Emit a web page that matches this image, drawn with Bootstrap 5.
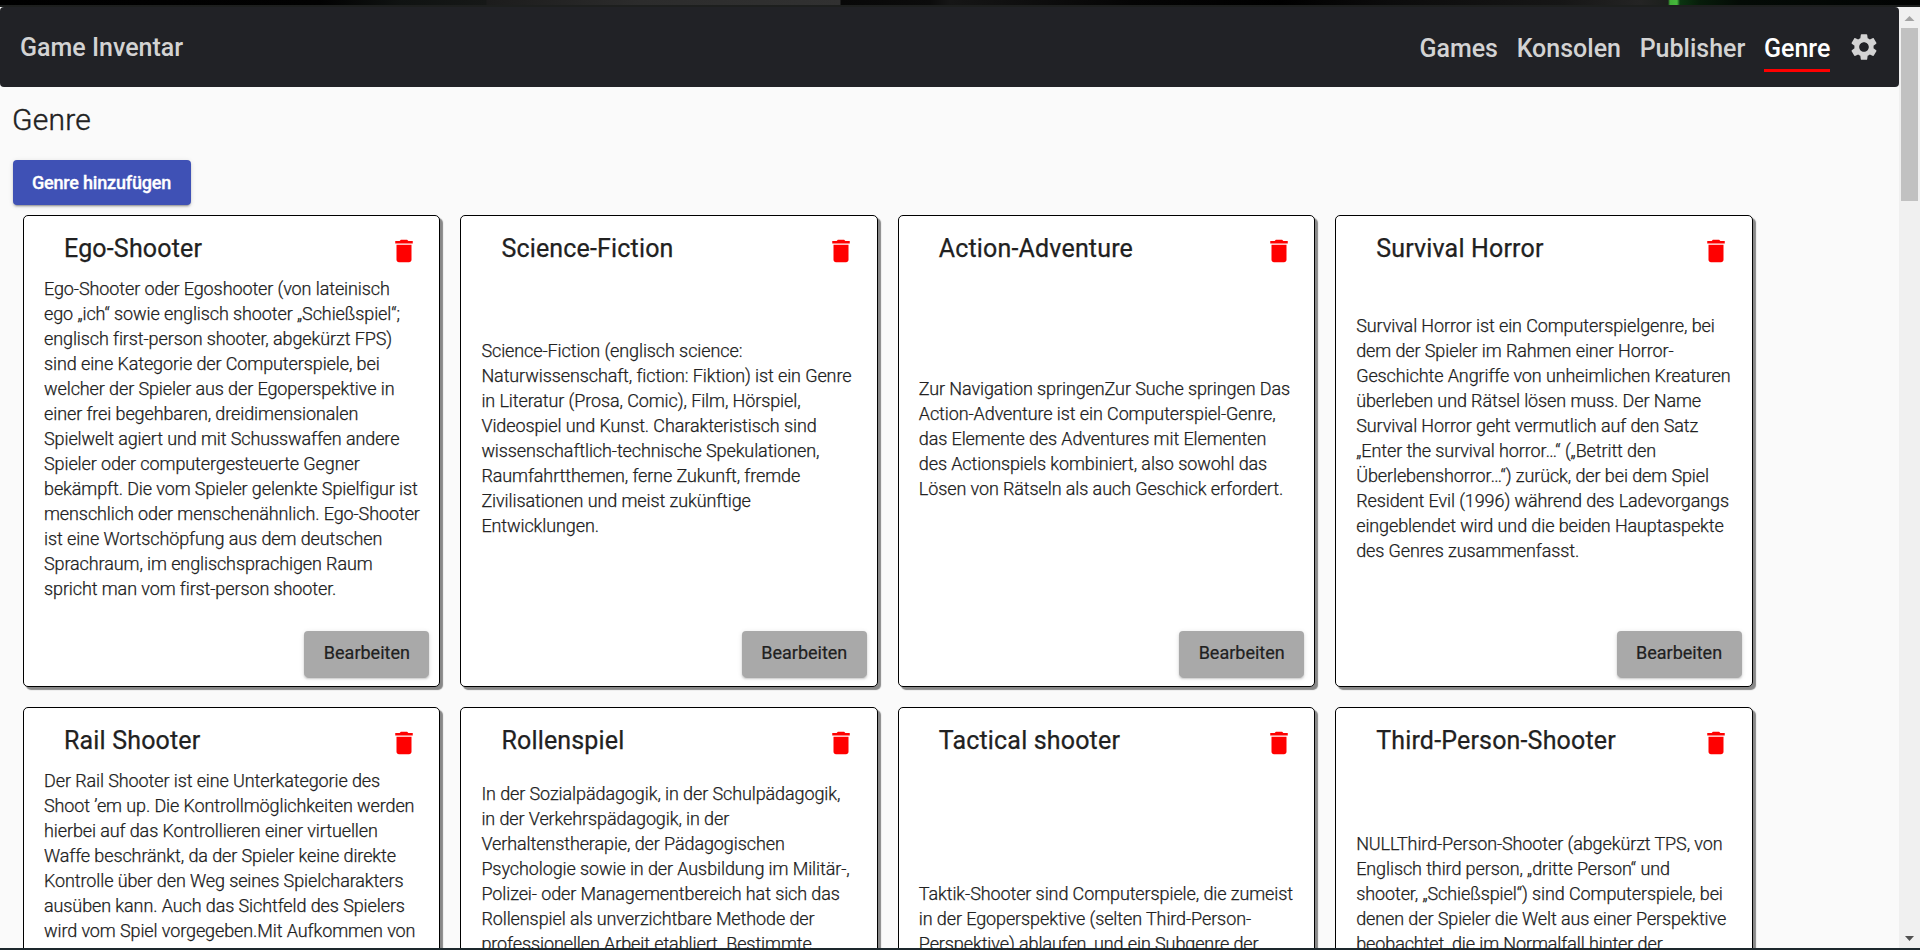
<!DOCTYPE html>
<html lang="de">
<head>
<meta charset="utf-8">
<title>Game Inventar</title>
<link rel="stylesheet" href="https://cdn.jsdelivr.net/npm/bootstrap@5.3.0/dist/css/bootstrap.min.css">
<style>
body { background: #fafafa; color: #212121; font-family: Roboto, "Liberation Sans", sans-serif; height: 950px; overflow: hidden; }
.top-strip { height: 7px; border-bottom: 2px solid #1d1f1e; background: linear-gradient(90deg, #000 0, #020202 320px, #101312 400px, #161817 486px, #1c1c1c 487px, #2c2c2c 640px, #313131 840px, #080808 841px, #0c0c0c 930px, #161616 950px, #050505 1130px, #000 1280px, #0c0c0c 1390px, #161616 1560px, #242424 1640px, #1c1f1c 1668px, #3fae36 1670px, #46b83c 1677px, #0a3510 1680px, #071c0a 1700px, #040b06 1740px, #020303 1920px); }
.viewport-area { height: 941px; }
.page-area { width: 1899px; overflow: hidden; }
.topbar { height: 80px; background: #212226; border-radius: 4px; padding: 0 19px 0 20px; font-weight: 500; }
.topbar .navbar-brand, .topbar .nav-link { color: #d3d3d3; font-size: 25px; line-height: 32px; padding: 0; margin: 0; }
.topbar .navbar-brand { padding-top: 2px; }
.topbar .nav-link { border-bottom: 3px solid transparent; padding: 10px 0 4px; margin-top: 1px; }
.topbar .nav-link.active { color: #fff; border-color: #f00; }
.nav-items { gap: 18.7px; }
.topbar svg { margin-left: -1px; }
.page-title { font-size: 30px; font-weight: 300; line-height: 36px; margin: 15px 0 22px 12px; letter-spacing: .2px; -webkit-text-stroke: .4px #212121; }
.mat-btn { border: 0; border-radius: 4px; font-size: 18px; font-weight: 500; line-height: 45px; padding: 0; box-shadow: 0 3px 1px -2px rgba(0,0,0,.2), 0 2px 2px 0 rgba(0,0,0,.14), 0 1px 5px 0 rgba(0,0,0,.12); }
.mat-add { background: #3f51b5; color: #fff; margin-left: 13px; width: 178px; height: 45px; letter-spacing: -.2px; padding-right: 1px; -webkit-text-stroke: .3px #fff; }
.mat-edit { background: #a9a9a9; color: #212121; height: 46px; width: 125px; font-weight: 400; line-height: 44px; padding-bottom: 2px; -webkit-text-stroke: .2px #212121; }
.genre-list { width: 1780px; padding-left: 13px; }
.genre-card { width: 417.4px; height: 472px; margin: 10px; border: 1px solid #000; border-radius: 5px; box-shadow: 3px 3px 1px #888; background: #fff; }
.card-head { height: 60px; padding: 16px 20.3px 0 40px; }
.card-head h2 { font-size: 25px; font-weight: 400; line-height: 34px; margin: 0; letter-spacing: .17px; -webkit-text-stroke: .25px #212121; }
.card-head svg { margin-top: 4px; }
.genre-text { height: 324.6px; padding: 0 18.5px 0 20px; font-size: 18px; font-weight: 300; line-height: 25px; letter-spacing: -.1px; -webkit-text-stroke: .25px #212121; }
.card-foot { padding: 30.4px 10px 0 0; }
.scroll-rail { width: 21px; background: #f0f0f0; }
.scroll-rail .thumb { width: 17px; height: 173px; margin-left: 2px; background: #c1c1c1; }
.bottom-strip { height: 2px; background: #1d282d; }
</style>
</head>
<body>
<svg class="d-none">
  <symbol id="trash" viewBox="0 0 24 24"><path d="M6 19c0 1.1.9 2 2 2h8c1.1 0 2-.9 2-2V7H6v12zM19 4h-3.500l-1-1h-5l-1 1H5v2h14V4z"/></symbol>
  <symbol id="gear" viewBox="0 0 24 24"><path d="M19.140 12.940c.04-.3.06-.61.06-.94 0-.32-.02-.64-.07-.94l2.030-1.580c.18-.14.23-.41.12-.61l-1.920-3.320c-.12-.22-.37-.29-.59-.22l-2.390.96c-.5-.38-1.030-.7-1.620-.94l-.36-2.540c-.04-.24-.24-.41-.48-.41h-3.840c-.24 0-.43.17-.47.41l-.36 2.540c-.59.24-1.130.57-1.620.94l-2.390-.96c-.22-.08-.47 0-.59.22L2.740 8.870c-.12.21-.08.47.12.61l2.030 1.580c-.05.3-.09.63-.09.94s.02.64.07.94l-2.030 1.580c-.18.14-.23.41-.12.61l1.920 3.320c.12.22.37.29.59.22l2.390-.96c.5.38 1.030.7 1.620.94l.36 2.540c.05.24.24.41.48.41h3.840c.24 0 .44-.17.47-.41l.36-2.540c.59-.24 1.130-.56 1.620-.94l2.390.96c.22.08.47 0 .59-.22l1.920-3.320c.12-.22.07-.47-.12-.61l-2.010-1.580zM12 15.600c-1.980 0-3.600-1.620-3.600-3.600s1.620-3.600 3.600-3.600 3.600 1.620 3.600 3.600-1.620 3.600-3.600 3.600z"/></symbol>
</svg>
<div class="top-strip"></div>
<div class="viewport-area d-flex overflow-hidden">
  <div class="page-area">
    <nav class="topbar d-flex align-items-center justify-content-between">
      <a class="navbar-brand" href="#">Game Inventar</a>
      <div class="nav-items d-flex align-items-center">
        <a class="nav-link" href="#">Games</a>
        <a class="nav-link" href="#">Konsolen</a>
        <a class="nav-link" href="#">Publisher</a>
        <a class="nav-link active" href="#">Genre</a>
        <svg width="32" height="32" fill="#d3d3d3"><use href="#gear"/></svg>
      </div>
    </nav>
    <h1 class="page-title">Genre</h1>
    <button class="btn mat-btn mat-add d-block">Genre hinzufügen</button>
    <main class="genre-list d-flex flex-wrap">
      <article class="genre-card">
        <div class="card-head d-flex justify-content-between"><h2>Ego-Shooter</h2><svg width="30" height="30" fill="red"><use href="#trash"/></svg></div>
        <div class="genre-text d-flex align-items-center"><div>Ego-Shooter oder Egoshooter (von lateinisch ego „ich“ sowie englisch shooter „Schießspiel“; englisch first-person shooter, abgekürzt FPS) sind eine Kategorie der Computerspiele, bei welcher der Spieler aus der Egoperspektive in einer frei begehbaren, dreidimensionalen Spielwelt agiert und mit Schusswaffen andere Spieler oder computergesteuerte Gegner bekämpft. Die vom Spieler gelenkte Spielfigur ist menschlich oder menschenähnlich. Ego-Shooter ist eine Wortschöpfung aus dem deutschen Sprachraum, im englischsprachigen Raum spricht man vom first-person shooter.</div></div>
        <div class="card-foot d-flex justify-content-end"><button class="btn mat-btn mat-edit">Bearbeiten</button></div>
      </article>
      <article class="genre-card">
        <div class="card-head d-flex justify-content-between"><h2>Science-Fiction</h2><svg width="30" height="30" fill="red"><use href="#trash"/></svg></div>
        <div class="genre-text d-flex align-items-center"><div>Science-Fiction (englisch science: Naturwissenschaft, fiction: Fiktion) ist ein Genre in Literatur (Prosa, Comic), Film, Hörspiel, Videospiel und Kunst. Charakteristisch sind wissenschaftlich-technische Spekulationen, Raumfahrtthemen, ferne Zukunft, fremde Zivilisationen und meist zukünftige Entwicklungen.</div></div>
        <div class="card-foot d-flex justify-content-end"><button class="btn mat-btn mat-edit">Bearbeiten</button></div>
      </article>
      <article class="genre-card">
        <div class="card-head d-flex justify-content-between"><h2>Action-Adventure</h2><svg width="30" height="30" fill="red"><use href="#trash"/></svg></div>
        <div class="genre-text d-flex align-items-center"><div>Zur Navigation springenZur Suche springen Das Action-Adventure ist ein Computerspiel-Genre, das Elemente des Adventures mit Elementen des Actionspiels kombiniert, also sowohl das Lösen von Rätseln als auch Geschick erfordert.</div></div>
        <div class="card-foot d-flex justify-content-end"><button class="btn mat-btn mat-edit">Bearbeiten</button></div>
      </article>
      <article class="genre-card">
        <div class="card-head d-flex justify-content-between"><h2>Survival Horror</h2><svg width="30" height="30" fill="red"><use href="#trash"/></svg></div>
        <div class="genre-text d-flex align-items-center"><div>Survival Horror ist ein Computerspielgenre, bei dem der Spieler im Rahmen einer Horror-Geschichte Angriffe von unheimlichen Kreaturen überleben und Rätsel lösen muss. Der Name Survival Horror geht vermutlich auf den Satz „Enter the survival horror…“ („Betritt den Überlebenshorror…“) zurück, der bei dem Spiel Resident Evil (1996) während des Ladevorgangs eingeblendet wird und die beiden Hauptaspekte des Genres zusammenfasst.</div></div>
        <div class="card-foot d-flex justify-content-end"><button class="btn mat-btn mat-edit">Bearbeiten</button></div>
      </article>
      <article class="genre-card">
        <div class="card-head d-flex justify-content-between"><h2>Rail Shooter</h2><svg width="30" height="30" fill="red"><use href="#trash"/></svg></div>
        <div class="genre-text"><div>Der Rail Shooter ist eine Unterkategorie des Shoot ’em up. Die Kontrollmöglichkeiten werden hierbei auf das Kontrollieren einer virtuellen Waffe beschränkt, da der Spieler keine direkte Kontrolle über den Weg seines Spielcharakters ausüben kann. Auch das Sichtfeld des Spielers wird vom Spiel vorgegeben.Mit Aufkommen von</div></div>
      </article>
      <article class="genre-card">
        <div class="card-head d-flex justify-content-between"><h2>Rollenspiel</h2><svg width="30" height="30" fill="red"><use href="#trash"/></svg></div>
        <div class="genre-text"><div style="padding-top:12.5px">In der Sozialpädagogik, in der Schulpädagogik,<br>in der Verkehrspädagogik, in der Verhaltenstherapie, der Pädagogischen Psychologie sowie in der Ausbildung im Militär-, Polizei- oder Managementbereich hat sich das Rollenspiel als unverzichtbare Methode der professionellen Arbeit etabliert. Bestimmte</div></div>
      </article>
      <article class="genre-card">
        <div class="card-head d-flex justify-content-between"><h2>Tactical shooter</h2><svg width="30" height="30" fill="red"><use href="#trash"/></svg></div>
        <div class="genre-text"><div style="padding-top:112.5px">Taktik-Shooter sind Computerspiele, die zumeist in der Egoperspektive (selten Third-Person-Perspektive) ablaufen, und ein Subgenre der</div></div>
      </article>
      <article class="genre-card">
        <div class="card-head d-flex justify-content-between"><h2>Third-Person-Shooter</h2><svg width="30" height="30" fill="red"><use href="#trash"/></svg></div>
        <div class="genre-text"><div style="padding-top:62.5px">NULLThird-Person-Shooter (abgekürzt TPS, von Englisch third person, „dritte Person“ und shooter, „Schießspiel“) sind Computerspiele, bei denen der Spieler die Welt aus einer Perspektive beobachtet, die im Normalfall hinter der</div></div>
      </article>
    </main>
  </div>
  <div class="scroll-rail d-flex flex-column justify-content-between">
    <div>
      <svg class="d-block" width="21" height="21"><path d="M10.500 9l5 5h-10z" fill="#a3a3a3"/></svg>
      <div class="thumb"></div>
    </div>
    <svg class="d-block" width="21" height="21"><path d="M6 9h9l-4.500 5z" fill="#505050"/></svg>
  </div>
</div>
<div class="bottom-strip"></div>
<script src="https://cdn.jsdelivr.net/npm/bootstrap@5.3.0/dist/js/bootstrap.bundle.min.js"></script>
</body>
</html>
